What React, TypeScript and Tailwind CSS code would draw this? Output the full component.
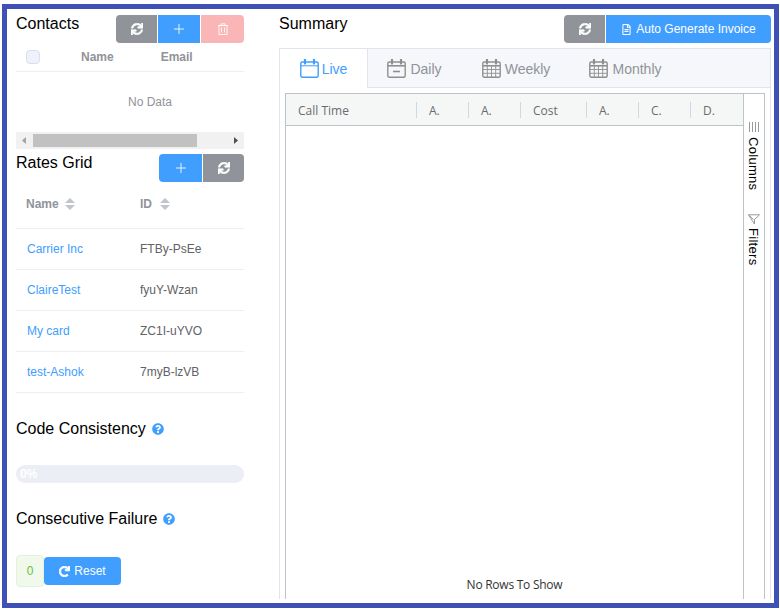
import React from "react";
import { FaSync, FaQuestionCircle, FaRedo, FaRegFileAlt } from "react-icons/fa";
import { Plus } from "lucide-react";

const Refresh = () => <FaSync size={12} color="#fff" stroke="#fff" strokeWidth={24} />;
const PlusIcon = () => <Plus size={16} strokeWidth={1.3} color="#fff" />;

function Trash() {
  return (
    <svg width="12" height="12" viewBox="0 0 12 12" fill="none" stroke="#fff" strokeOpacity="0.85" strokeWidth="1">
      <path d="M1 2.5H11M4 2.5V0.8H8V2.5" />
      <rect x="2" y="2.5" width="8" height="9" />
      <path d="M4.5 4.5V9.5M7.5 4.5V9.5" />
    </svg>
  );
}

function Cal({ color, kind }: { color: string; kind: "live" | "daily" | "grid" }) {
  return (
    <svg width="19" height="19" viewBox="0 0 19 19" fill="none" stroke={color} strokeWidth="1.4">
      <rect x="0.8" y="3" width="17.4" height="15.2" rx="1.5" />
      <path d="M1 6.8H18" strokeWidth={kind === "live" ? 1 : 1.6} />
      <path d="M5 0.8V4.6M14 0.8V4.6" strokeWidth="2.2" strokeLinecap="round" />
      {kind === "daily" && <path d="M6 12.5H13" strokeWidth="1.6" />}
      {kind === "grid" && <path d="M5.3 7V18M9.5 7V18M13.7 7V18M1 10.5H18M1 14.3H18" strokeWidth="0.9" />}
    </svg>
  );
}

function Sorter() {
  return (
    <svg width="10" height="12" viewBox="0 0 10 12" fill="#c0c4cc">
      <path d="M5 0L10 5H0Z" />
      <path d="M5 12L0 7H10Z" />
    </svg>
  );
}

const Help = () => <FaQuestionCircle className="text-[#409eff] text-[12px]" />;

const rates = [
  ["Carrier Inc", "FTBy-PsEe"],
  ["ClaireTest", "fyuY-Wzan"],
  ["My card", "ZC1I-uYVO"],
  ["test-Ashok", "7myB-lzVB"],
];

const tabs: [string, "live" | "daily" | "grid", string][] = [
  ["Live", "live", "w-[88px]"],
  ["Daily", "daily", "w-[93px]"],
  ["Weekly", "grid", "w-[110px]"],
  ["Monthly", "grid", "w-[109px]"],
];

const cols: [string, string][] = [
  ["Call Time", "w-[131px]"],
  ["A.", "w-[52px]"],
  ["A.", "w-[52px]"],
  ["Cost", "w-[66px]"],
  ["A.", "w-[52px]"],
  ["C.", "w-[52px]"],
  ["D.", "w-[52px]"],
];

export default function App() {
  return (
    <div className="w-[780px] h-[610px] bg-white pt-1 pl-0.5 pr-px pb-0.5 font-['Liberation_Sans',Arial,sans-serif] overflow-hidden">
      <div className="w-[777px] h-[604px] border-[5px] border-[#3f51b5] flex pl-[9px] overflow-hidden">
        {/* left */}
        <div className="w-[228px] shrink-0">
          <div className="flex justify-between pt-1.5 h-[34px]">
            <span className="text-base leading-[18px] text-black">Contacts</span>
            <div className="flex h-7 w-[128px] rounded overflow-hidden gap-px">
              <div className="w-[41px] bg-[#909399] flex items-center justify-center"><Refresh /></div>
              <div className="w-[42px] bg-[#409eff] flex items-center justify-center"><PlusIcon /></div>
              <div className="flex-1 bg-[#fab6b6] flex items-center justify-center"><Trash /></div>
            </div>
          </div>
          <div className="h-[29px] pb-px flex items-center border-b border-[#ebeef5] text-xs font-bold text-[#909399]">
            <span className="w-3.5 h-3.5 ml-2.5 border border-[#dcdfe6] rounded-sm bg-[#edf2fc]" />
            <span className="ml-[41px]">Name</span>
            <span className="ml-[47px]">Email</span>
          </div>
          <div className="h-[60px] pl-10 flex items-center justify-center text-xs text-[#909399]">No Data</div>
          <div className="h-[17px] bg-[#f1f1f1] flex items-center">
            <svg width="17" height="17" viewBox="0 0 17 17" fill="#a3a3a3"><path d="M6 8.5L10 5V12Z" /></svg>
            <div className="w-[164px] h-[13px] bg-[#c1c1c1]" />
            <div className="flex-1" />
            <svg width="17" height="17" viewBox="0 0 17 17" fill="#505050"><path d="M11 8.5L7 5V12Z" /></svg>
          </div>

          <div className="flex justify-between pt-[5px] h-[33px]">
            <span className="text-base leading-[18px] text-black">Rates Grid</span>
            <div className="flex h-7 w-[85px] rounded overflow-hidden gap-px">
              <div className="w-[43px] bg-[#409eff] flex items-center justify-center"><PlusIcon /></div>
              <div className="flex-1 bg-[#909399] flex items-center justify-center"><Refresh /></div>
            </div>
          </div>
          <div className="h-[47px] pb-[3px] flex items-center border-b border-[#ebeef5] text-xs font-bold text-[#909399]">
            <span className="w-[124px] pl-2.5 flex items-center gap-[6px]">Name <Sorter /></span>
            <span className="flex items-center gap-[8px]">ID <Sorter /></span>
          </div>
          {rates.map(([n, id]) => (
            <div key={n} className="h-[41px] flex items-center border-b border-[#ebeef5] text-xs">
              <span className="w-[124px] pl-[11px] text-[#409eff]">{n}</span>
              <span className="text-[#606266]">{id}</span>
            </div>
          ))}

          <div className="mt-[27px] flex items-center h-[18px] gap-[6px] text-base text-black">
            Code Consistency <Help />
          </div>
          <div className="mt-[27px] h-[18px] rounded-full bg-[#ebeef5] pl-1 flex items-center text-xs font-bold text-white">0%</div>
          <div className="mt-[27px] flex items-center h-[18px] gap-[6px] text-base text-black">
            Consecutive Failure <Help />
          </div>
          <div className="mt-[27px] flex items-center">
            <div className="w-7 h-8 rounded border border-[#e1f3d8] bg-[#f0f9eb] text-[#67c23a] text-xs flex items-center justify-center">0</div>
            <div className="w-[77px] h-7 rounded-sm bg-[#409eff] text-white text-xs flex items-center justify-center gap-1"><FaRedo size={11} color="#fff" stroke="#fff" strokeWidth={40} />Reset</div>
          </div>
        </div>

        {/* right */}
        <div className="ml-[35px] w-[492px] shrink-0">
          <div className="flex justify-between pt-1.5 h-[39px]">
            <span className="text-base leading-[18px] text-black">Summary</span>
            <div className="flex h-7 rounded overflow-hidden gap-px">
              <div className="w-[41px] bg-[#909399] flex items-center justify-center"><Refresh /></div>
              <div className="w-[165px] bg-[#409eff] text-white text-xs flex items-center justify-center gap-1"><FaRegFileAlt className="text-[11px]" />Auto Generate Invoice</div>
            </div>
          </div>
          <div className="h-[551px] border border-[#dfe4ed] border-b-0 px-[5px] relative">
            <div className="-mx-[5px] h-[39px] bg-[#f5f7fa] border-b border-[#dfe4ed] flex text-sm text-[#909399]">
              {tabs.map(([t, k, w], i) => (
                <div
                  key={t}
                  className={
                    i === 0
                      ? `${w} h-[39px] bg-white border-r border-[#dfe4ed] text-[#409eff] flex items-center justify-center gap-[3px]`
                      : `${w} pt-px flex items-center justify-center gap-[4px]`
                  }
                >
                  <Cal color={i === 0 ? "#409eff" : "#8f8f8f"} kind={k} />
                  {t}
                </div>
              ))}
            </div>
            <div className="mt-[5px] h-[506px] border border-[#bdc3c7] border-b-0 flex font-['Open_Sans',sans-serif]">
              <div className="flex-1 flex flex-col">
                <div className="h-8 bg-[#f5f7f7] border-b border-[#bdc3c7] flex items-center text-xs text-[#6b6b6b]">
                  {cols.map(([c, w], i) => (
                    <div key={i} className={`${w} h-4 flex items-center pl-3 pt-0.5 border-r border-[#d5d8da] last:border-r-0`}>{c}</div>
                  ))}
                </div>
                <div className="flex-1 flex items-end justify-center pb-[6px] text-xs text-[#333] tracking-[-0.25px]">No Rows To Show</div>
              </div>
              <div className="w-[22px] border-l border-[#bdc3c7] flex flex-col items-center pt-[28px] text-[13px] text-black font-['Liberation_Sans',sans-serif] pr-[2px]">
                <svg width="12" height="10" viewBox="0 0 12 10" stroke="#9a9a9a" strokeWidth="1"><path d="M1.5 0V10M4.5 0V10M7.5 0V10M10.5 0V10" /></svg>
                <span className="[writing-mode:vertical-rl] mt-[5px] tracking-[0.3px]">Columns</span>
                <svg className="mt-[24px]" width="12" height="11" viewBox="0 0 12 11" fill="none" stroke="#9a9a9a" strokeWidth="1"><path d="M0.5 0.8H11.5L6.5 5.5V10Z M0.5 0.8L5.5 5.5" /></svg>
                <span className="[writing-mode:vertical-rl] mt-[3px] tracking-[0.3px]">Filters</span>
              </div>
            </div>
          </div>
        </div>
      </div>
    </div>
  );
}
